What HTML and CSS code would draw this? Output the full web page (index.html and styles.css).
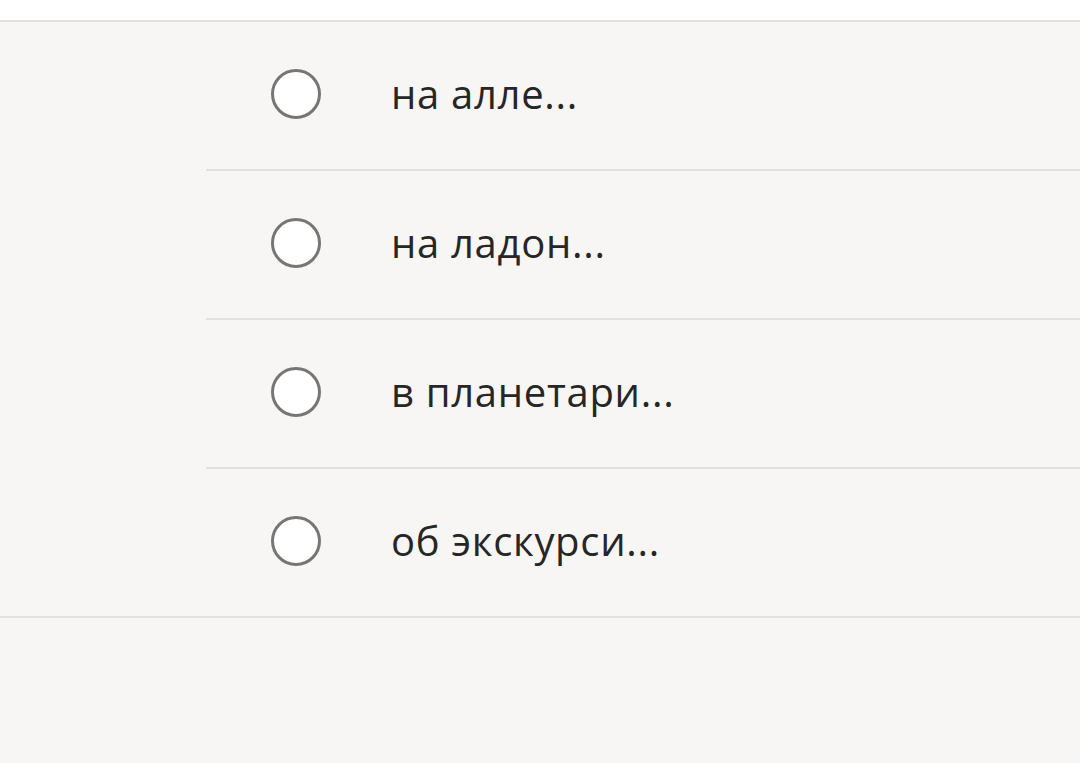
FILE: index.html
```html
<!DOCTYPE html>
<html lang="ru">
<head>
<meta charset="utf-8">
<link rel="stylesheet" href="styles.css">
</head>
<body>
<div class="top"></div>
<div class="list">
  <div class="row"><span class="radio"></span><span class="label">на алле...</span></div>
  <div class="row"><span class="radio"></span><span class="label">на ладон...</span></div>
  <div class="row"><span class="radio"></span><span class="label">в планетари...</span></div>
  <div class="row"><span class="radio"></span><span class="label">об экскурси...</span></div>
</div>
</body>
</html>
```
FILE: styles.css
```css
html, body {
  margin: 0;
  padding: 0;
  height: 100%;
}
body {
  background: #f7f6f4;
  font-family: "Open Sans", "Noto Sans", sans-serif;
  overflow: hidden;
}
.top {
  height: 20px;
  background: #ffffff;
  border-bottom: 2px solid #e2e0dd;
}
.list {
  border-bottom: 2px solid #e2e0dd;
}
.row {
  box-sizing: border-box;
  height: 149px;
  padding-bottom: 3px;
  margin-left: 206px;
  display: flex;
  align-items: center;
  border-bottom: 2px solid #e2e0dd;
}
.row:last-child {
  height: 147px;
  border-bottom: none;
}
.radio {
  box-sizing: border-box;
  width: 50px;
  height: 50px;
  border-radius: 50%;
  border: 3px solid #767676;
  background: #ffffff;
  margin-left: 65px;
  flex: none;
}
.label {
  margin-left: 70px;
  font-size: 40px;
  letter-spacing: 0.7px;
  color: #262626;
  line-height: 1;
}
```
